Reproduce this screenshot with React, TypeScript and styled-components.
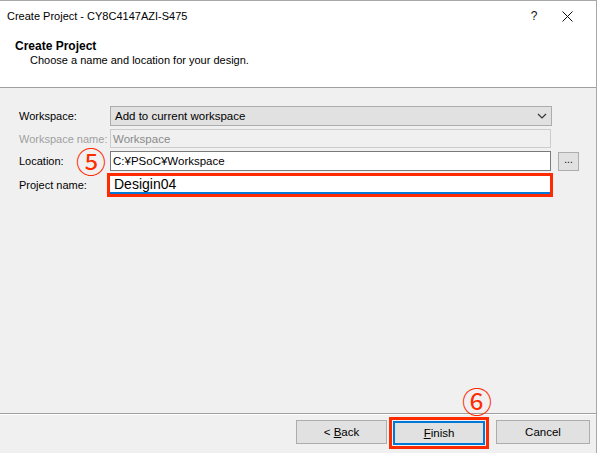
import React from 'react';
import styled, { createGlobalStyle } from 'styled-components';

const GlobalStyle = createGlobalStyle`
  html, body {
    margin: 0;
    padding: 0;
    background: #ffffff;
  }
  body {
    font-family: "Liberation Sans", Arial, sans-serif;
    font-size: 11px;
    line-height: 14px;
    color: #000;
  }
`;

const Window = styled.div`
  position: relative;
  width: 597px;
  height: 453px;
  box-sizing: border-box;
  border-top: 1px solid #a8a8a8;
  border-right: 1px solid #a8a8a8;
  background: #f0f0f0;
  display: flex;
  flex-direction: column;
  overflow: hidden;
`;

const Top = styled.div`
  background: #fff;
  height: 86px;
  border-bottom: 1px solid #a0a0a0;
  display: flex;
  flex-direction: column;
`;

const TitleBar = styled.div`
  height: 32px;
  display: flex;
  align-items: center;
  padding-left: 7px;
  font-size: 11px;
`;

const TitleText = styled.div`
  flex: 1;
  margin-top: -2px;
`;

const TitleButton = styled.div<{ $w: number }>`
  width: ${p => p.$w}px;
  text-align: center;
  font-size: 12px;
  color: #111;
  margin-top: -2px;
  display: flex;
  justify-content: center;
`;

const Header = styled.div`
  padding-left: 15px;
  display: flex;
  flex-direction: column;
  margin-top: 6px;
`;

const HeaderTitle = styled.div`
  font-weight: 700;
  font-size: 12px;
  line-height: 14px;
`;

const HeaderSub = styled.div`
  padding-left: 15px;
  font-size: 11px;
  line-height: 14px;
`;

const Body = styled.div`
  flex: 1;
  padding: 18px 0 0 19px;
  display: flex;
  flex-direction: column;
  position: relative;
`;

const Row = styled.div<{ $gap: number }>`
  display: flex;
  align-items: center;
  margin-bottom: ${p => p.$gap}px;
`;

const Label = styled.div<{ $disabled?: boolean; $w?: number }>`
  width: ${p => p.$w ?? 91}px;
  white-space: nowrap;
  font-size: 11px;
  color: ${p => (p.$disabled ? '#a0a0a0' : '#000')};
`;

const Select = styled.div`
  width: 442px;
  height: 20px;
  box-sizing: border-box;
  border: 1px solid #adadad;
  background: #e1e1e1;
  display: flex;
  align-items: center;
  padding: 0 4px 0 4px;
  font-size: 11.5px;
`;

const SelectText = styled.div`
  flex: 1;
`;

const Field = styled.div<{ $disabled?: boolean }>`
  width: 441px;
  height: ${p => (p.$disabled ? 19 : 20)}px;
  box-sizing: border-box;
  border: 1px solid ${p => (p.$disabled ? '#cccccc' : '#7a7a7a')};
  background: ${p => (p.$disabled ? '#f0f0f0' : '#fff')};
  color: ${p => (p.$disabled ? '#8a8a8a' : '#000')};
  display: flex;
  align-items: center;
  padding-left: 2px;
  font-size: 11.5px;
`;

const SmallButton = styled.div`
  width: 21px;
  height: 19px;
  box-sizing: border-box;
  margin-left: 7px;
  border: 1px solid #adadad;
  background: #e1e1e1;
  font-size: 10px;
  display: flex;
  align-items: center;
  justify-content: center;
  padding-bottom: 3px;
`;

const Highlight = styled.div<{ $pad?: number }>`
  border: 3px solid #ff2a00;
  padding: ${p => p.$pad ?? 0}px;
  display: flex;
`;

const ActiveField = styled.div`
  width: 440px;
  height: 18px;
  box-sizing: border-box;
  background: #fff;
  border-bottom: 2px solid #0078d7;
  display: flex;
  align-items: center;
  padding-left: 4px;
  font-size: 14px;
`;

const Marker = styled.div`
  position: absolute;
  color: #ff2a00;
  font-size: 30px;
  line-height: 26px;
  font-family: "Noto Sans CJK JP", sans-serif;
`;

const Footer = styled.div`
  height: 40px;
  box-sizing: border-box;
  border-top: 1px solid #a0a0a0;
  box-shadow: inset 0 1px 0 #ffffff;
  display: flex;
  justify-content: flex-end;
  align-items: flex-start;
  padding: 3px 6px 0 0;
  position: relative;
`;

const Button = styled.div<{ $focus?: boolean; $w?: number }>`
  width: ${p => p.$w ?? 92}px;
  height: 24px;
  margin-top: ${p => (p.$focus ? 0 : 3)}px;
  box-sizing: border-box;
  border: ${p => (p.$focus ? '2px solid #0078d7' : '1px solid #adadad')};
  background: #e1e1e1;
  display: flex;
  align-items: center;
  justify-content: center;
  font-size: 11.5px;
  u {
    text-decoration: underline;
    text-underline-offset: 1px;
  }
`;

const Chevron = () => (
  <svg width="10" height="6" viewBox="0 0 10 6">
    <path d="M1 1 L5 5 L9 1" fill="none" stroke="#333" strokeWidth="1.2" />
  </svg>
);

const Close = () => (
  <svg width="11" height="11" viewBox="0 0 11 11">
    <path d="M0.5 0.5 L10.5 10.5 M10.5 0.5 L0.5 10.5" stroke="#111" strokeWidth="1" />
  </svg>
);

export default function App() {
  return (
    <>
      <GlobalStyle />
      <Window>
        <Top>
          <TitleBar>
            <TitleText>Create Project - CY8C4147AZI-S475</TitleText>
            <TitleButton $w={20}>?</TitleButton>
            <TitleButton $w={46} style={{ marginRight: 6 }}>
              <Close />
            </TitleButton>
          </TitleBar>
          <Header>
            <HeaderTitle>Create Project</HeaderTitle>
            <HeaderSub>Choose a name and location for your design.</HeaderSub>
          </Header>
        </Top>
        <Body>
          <Row $gap={3}>
            <Label>Workspace:</Label>
            <Select>
              <SelectText>Add to current workspace</SelectText>
              <Chevron />
            </Select>
          </Row>
          <Row $gap={3}>
            <Label $disabled>Workspace name:</Label>
            <Field $disabled>Workspace</Field>
          </Row>
          <Row $gap={2}>
            <Label>Location:</Label>
            <Field>C:¥PSoC¥Workspace</Field>
            <SmallButton>...</SmallButton>
          </Row>
          <Row $gap={0}>
            <Label $w={88}>Project name:</Label>
            <Highlight $pad={0}>
              <ActiveField>Desigin04</ActiveField>
            </Highlight>
          </Row>
          <Marker style={{ left: 76, top: 59 }}>⑤</Marker>
        </Body>
        <Footer>
          <Marker style={{ left: 462, top: -27 }}>⑥</Marker>
          <Button $w={91}>
            &lt;&nbsp;<u>B</u>ack
          </Button>
          <Highlight $pad={1} style={{ marginLeft: 2, marginRight: 7 }}>
            <Button $focus>
              <u>F</u>inish
            </Button>
          </Highlight>
          <Button $w={94}>Cancel</Button>
        </Footer>
      </Window>
    </>
  );
}
